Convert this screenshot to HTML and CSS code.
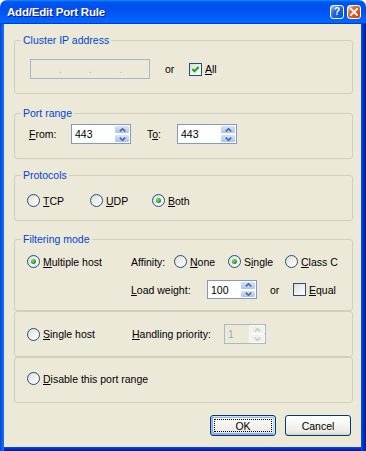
FILE: index.html
```html
<!DOCTYPE html>
<html>
<head>
<meta charset="utf-8">
<title>Add/Edit Port Rule</title>
<link rel="stylesheet" href="styles.css">
</head>
<body>
<div class="window">
  <div class="titlebar">
    <span class="title">Add/Edit Port Rule</span>
    <span class="tb-btn tb-help">?</span>
    <span class="tb-btn tb-close"><svg width="8" height="8" viewBox="0 0 8 8"><path d="M1 1L7 7M7 1L1 7" stroke="#fff" stroke-width="1.8" stroke-linecap="square"/></svg></span>
  </div>
  <div class="frame">
    <div class="client">
      <fieldset class="group g-cluster">
        <legend>Cluster IP address</legend>
        <div class="row h20 in9">
          <div class="ipfield"><span class="seg"></span><span class="ipdot">.</span><span class="seg"></span><span class="ipdot">.</span><span class="seg"></span><span class="ipdot">.</span><span class="seg"></span></div>
          <span class="or or-ip">or</span>
          <span class="check"><span class="cb"><svg width="11" height="11" viewBox="0 0 11 11"><path d="M2.5 5L4.5 7.3L8.6 3" fill="none" stroke="#21a121" stroke-width="2"/></svg></span><span><u>A</u>ll</span></span>
        </div>
      </fieldset>

      <fieldset class="group g-port">
        <legend>Port range</legend>
        <div class="row h20 in8">
          <span class="lbl w42"><u>F</u>rom:</span>
          <div class="spin w60 h20"><span class="spin-val">443</span><span class="spin-btns"><span class="sb"><svg width="7" height="4" viewBox="0 0 7 4"><path d="M0.8 3.4L3.5 0.8L6.2 3.4" fill="none" stroke="#4d6185" stroke-width="1.5"/></svg></span><span class="sb"><svg width="7" height="4" viewBox="0 0 7 4"><path d="M0.8 0.6L3.5 3.2L6.2 0.6" fill="none" stroke="#4d6185" stroke-width="1.5"/></svg></span></span></div>
          <span class="lbl w30 ml16">T<u>o</u>:</span>
          <div class="spin w60 h20"><span class="spin-val">443</span><span class="spin-btns"><span class="sb"><svg width="7" height="4" viewBox="0 0 7 4"><path d="M0.8 3.4L3.5 0.8L6.2 3.4" fill="none" stroke="#4d6185" stroke-width="1.5"/></svg></span><span class="sb"><svg width="7" height="4" viewBox="0 0 7 4"><path d="M0.8 0.6L3.5 3.2L6.2 0.6" fill="none" stroke="#4d6185" stroke-width="1.5"/></svg></span></span></div>
        </div>
      </fieldset>

      <fieldset class="group g-proto">
        <legend>Protocols</legend>
        <div class="row h13 in6">
          <span class="opt w63"><span class="rb"></span><span><u>T</u>CP</span></span>
          <span class="opt w62"><span class="rb"></span><span><u>U</u>DP</span></span>
          <span class="opt"><span class="rb on"></span><span><u>B</u>oth</span></span>
        </div>
      </fieldset>

      <fieldset class="group g-filter">
        <legend>Filtering mode</legend>
        <div class="row h13 in6">
          <span class="opt w104"><span class="rb on"></span><span><u>M</u>ultiple host</span></span>
          <span class="lbl w43">Affinity:</span>
          <span class="opt w54"><span class="rb"></span><span><u>N</u>one</span></span>
          <span class="opt w57"><span class="rb on"></span><span>S<u>i</u>ngle</span></span>
          <span class="opt"><span class="rb"></span><span><u>C</u>lass C</span></span>
        </div>
        <div class="row h19 load-row">
          <span class="lbl w76"><u>L</u>oad weight:</span>
          <div class="spin w50 h19"><span class="spin-val">100</span><span class="spin-btns"><span class="sb"><svg width="7" height="4" viewBox="0 0 7 4"><path d="M0.8 3.4L3.5 0.8L6.2 3.4" fill="none" stroke="#4d6185" stroke-width="1.5"/></svg></span><span class="sb"><svg width="7" height="4" viewBox="0 0 7 4"><path d="M0.8 0.6L3.5 3.2L6.2 0.6" fill="none" stroke="#4d6185" stroke-width="1.5"/></svg></span></span></div>
          <span class="or or-load">or</span>
          <span class="check"><span class="cb"></span><span><u>E</u>qual</span></span>
        </div>
      </fieldset>

      <fieldset class="group g-single">
        <div class="row h20 in6">
          <span class="opt w105"><span class="rb"></span><span><u>S</u>ingle host</span></span>
          <span class="lbl w92"><u>H</u>andling priority:</span>
          <div class="spin w42 h20 disabled"><span class="spin-val">1</span><span class="spin-btns"><span class="sb"><svg width="7" height="4" viewBox="0 0 7 4"><path d="M0.8 3.4L3.5 0.8L6.2 3.4" fill="none" stroke="#c9c7ba" stroke-width="1.5"/></svg></span><span class="sb"><svg width="7" height="4" viewBox="0 0 7 4"><path d="M0.8 0.6L3.5 3.2L6.2 0.6" fill="none" stroke="#c9c7ba" stroke-width="1.5"/></svg></span></span></div>
        </div>
      </fieldset>

      <fieldset class="group g-disable">
        <div class="row h13 in6">
          <span class="opt"><span class="rb"></span><span><u>D</u>isable this port range</span></span>
        </div>
      </fieldset>

      <div class="buttons">
        <button class="btn default" type="button"><span class="focus">OK</span></button>
        <button class="btn" type="button">Cancel</button>
      </div>
    </div>
  </div>
</div>
</body>
</html>
```

FILE: styles.css
```css
* { box-sizing: border-box; }
html, body { margin: 0; padding: 0; }
body {
  width: 366px;
  height: 451px;
  background: #ffffff;
  font-family: "Liberation Sans", Arial, sans-serif;
  font-size: 10.5px;
  color: #000;
  overflow: hidden;
}
.window {
  width: 366px;
  height: 451px;
  display: flex;
  flex-direction: column;
}
.titlebar {
  height: 24px;
  flex: none;
  display: flex;
  align-items: center;
  gap: 3px;
  padding: 0 5px 0 7px;
  border-radius: 7px 7px 0 0;
  background: linear-gradient(180deg, #0997ff 0%, #0053ee 8%, #0050ee 40%, #0066ff 88%, #0066ff 93%, #005bff 95%, #003dd7 96%, #003dd7 100%);
}
.title {
  flex: 1;
  color: #fff;
  font-weight: bold;
  font-size: 11.5px;
  letter-spacing: -0.2px;
  text-shadow: 1px 1px #0f1089;
}
.tb-btn {
  width: 14px;
  height: 14px;
  border: 1px solid #fff;
  border-radius: 3px;
  display: flex;
  align-items: center;
  justify-content: center;
  color: #fff;
  font-weight: bold;
  font-size: 10px;
  line-height: 1;
}
.tb-help {
  background: radial-gradient(circle at 90% 90%, #0054e9 0%, #2263d5 55%, #4479e4 70%, #a3bbec 90%, #fff 100%);
}
.tb-close {
  background: radial-gradient(circle at 90% 90%, #cc4600 0%, #dc6527 55%, #cd7546 70%, #ffccb2 90%, #fff 100%);
}
.frame {
  flex: 1;
  display: flex;
  padding: 0 5px 4px 4px;
  background:
    linear-gradient(90deg, #0043cf 0px, #0c5ff0 2px, #166aee 3px) left top / 4px 100% no-repeat,
    linear-gradient(90deg, #0a52e6 0px, #0034c0 2px, #001a9a 5px) right top / 5px 100% no-repeat,
    linear-gradient(180deg, #0a4ee2 0px, #0031b8 2px, #00148a 4px) left bottom / 100% 4px no-repeat;
}
.client {
  flex: 1;
  background: #ece9d8;
  padding: 0 8px 0 10px;
  display: flex;
  flex-direction: column;
}
.group {
  margin: 0;
  padding: 0 0 0 6px;
  min-width: 0;
  border: 1px solid #d0d0bf;
  border-radius: 3px;
}
.group legend {
  margin-left: 0;
  padding: 0 2px;
  line-height: 13px;
  color: #0046d5;
}
.g-cluster { margin-top: 10px; padding-top: 12px; padding-bottom: 14px; }
.g-port { margin-top: 13px; padding-top: 4px; padding-bottom: 14px; }
.g-proto { margin-top: 10px; padding-top: 12px; padding-bottom: 13px; }
.g-filter { margin-top: 12px; padding-top: 9px; padding-bottom: 11px; }
.g-single { padding-top: 12px; padding-bottom: 12px; }
.g-disable { padding-top: 14px; padding-bottom: 17px; }

.row { display: flex; align-items: center; }
.in9 { margin-left: 9px; }
.in8 { margin-left: 8px; }
.in6 { margin-left: 6px; }
.h20 { height: 20px; }
.h19 { height: 19px; }
.h13 { height: 13px; }
.load-row { margin-top: 12px; margin-left: 110px; }

.lbl { flex: none; white-space: nowrap; }
.w30 { width: 30px; }
.w42 { width: 42px; }
.w43 { width: 43px; }
.w50 { width: 50px; }
.w54 { width: 54px; }
.w57 { width: 57px; }
.w60 { width: 60px; }
.w62 { width: 62px; }
.w63 { width: 63px; }
.w76 { width: 76px; }
.w92 { width: 92px; }
.w104 { width: 104px; }
.w105 { width: 105px; }
.ml16 { margin-left: 16px; }

.ipfield {
  width: 120px;
  height: 20px;
  border: 1px solid #a5b7cc;
  background: #ece9d8;
  display: flex;
  align-items: center;
  color: #aca899;
}
.ipfield .seg { flex: 1; }
.ipfield .ipdot { width: 2px; overflow: hidden; line-height: 10px; }
.or { flex: none; }
.or-ip { margin-left: 15px; width: 24px; }
.or-load { margin-left: 13px; width: 23px; }

.check { display: flex; align-items: center; gap: 3px; }
.cb {
  width: 13px;
  height: 13px;
  flex: none;
  border: 1px solid #1c5180;
  background: linear-gradient(135deg, #dcdcd7 0%, #f2f2f0 60%, #ffffff 100%);
  display: flex;
}

.opt { display: flex; align-items: center; gap: 3px; flex: none; white-space: nowrap; }
.rb {
  width: 13px;
  height: 13px;
  flex: none;
  border-radius: 50%;
  border: 1px solid #1c5180;
  background: linear-gradient(135deg, #dcdcd7 0%, #f4f4f2 60%, #ffffff 100%);
  display: flex;
  align-items: center;
  justify-content: center;
}
.rb.on::after {
  content: "";
  width: 5px;
  height: 5px;
  border-radius: 50%;
  background: radial-gradient(circle at 35% 35%, #7be47b 0%, #21a121 60%, #18801a 100%);
}

.spin {
  flex: none;
  display: flex;
  border: 1px solid #7f9db9;
  background: #fff;
}
.spin-val { flex: 1; padding-left: 3px; display: flex; align-items: center; }
.spin-btns { width: 16px; display: flex; flex-direction: column; }
.sb {
  flex: 1;
  border: 1px solid #fff;
  border-radius: 2px;
  background: linear-gradient(180deg, #d5e2fc 0%, #bcd0f8 60%, #aac0f2 100%);
  display: flex;
  align-items: center;
  justify-content: center;
}
.spin.disabled { border-color: #a9b9cc; background: #ece9d8; color: #aca899; }
.spin.disabled .sb { background: #f1f0ea; border-color: #fafaf8; }

.buttons {
  display: flex;
  justify-content: flex-end;
  gap: 9px;
  margin-top: 12px;
  padding-right: 2px;
}
.btn {
  width: 66px;
  height: 21px;
  padding: 0;
  font: inherit;
  color: #000;
  border: 1px solid #003c74;
  border-radius: 3px;
  background: linear-gradient(180deg, #ffffff 0%, #f6f6f3 40%, #eceae3 85%, #d6d0c5 100%);
  display: flex;
  align-items: center;
  justify-content: center;
}
.btn.default {
  box-shadow: inset -1px 1px #cee7ff, inset 1px 2px #98b8ea, inset -2px 2px #bcd4f6, inset 1px -1px #89ade4, inset 2px -2px #89ade4;
}
.btn .focus {
  flex: 1;
  align-self: stretch;
  margin: 3px;
  border: 1px dotted #000;
  display: flex;
  align-items: center;
  justify-content: center;
}
```
